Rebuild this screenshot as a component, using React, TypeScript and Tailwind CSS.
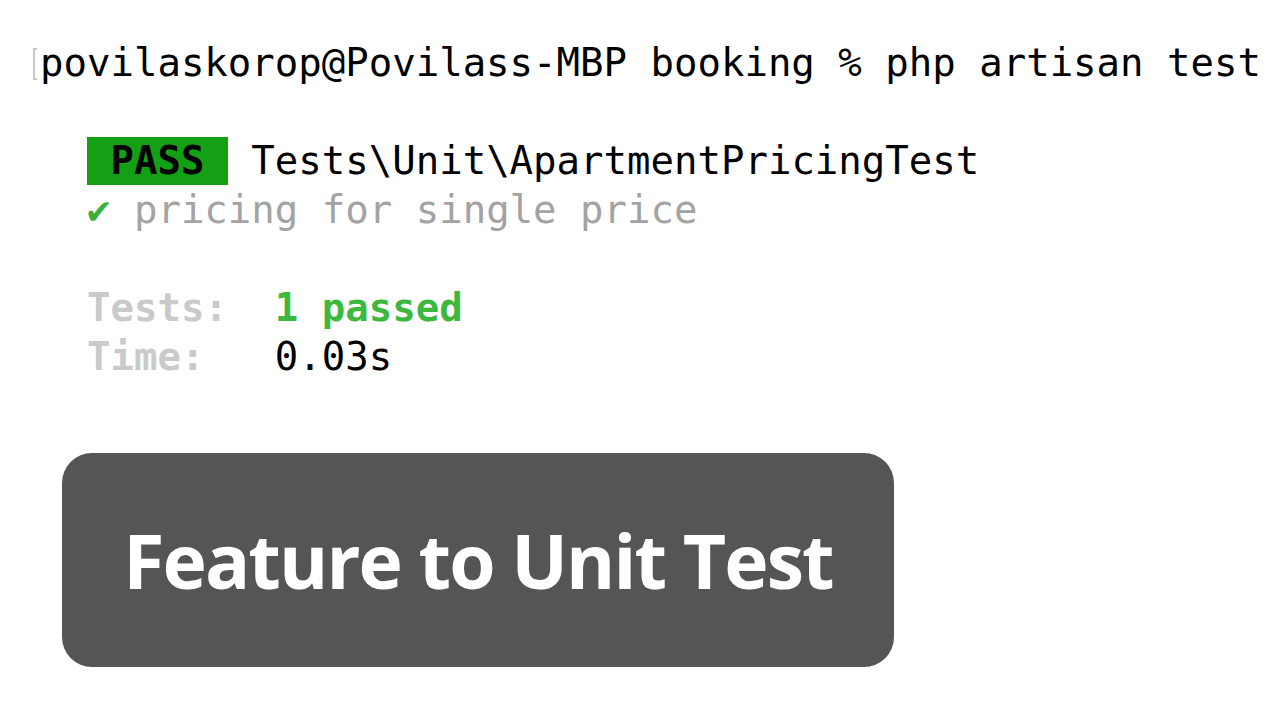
export default function App() {
  const mono = "font-['DejaVu_Sans_Mono','Liberation_Mono',monospace]";
  return (
    <main className="w-[1280px] h-[720px] bg-white overflow-hidden flex flex-col">
      {/* terminal output */}
      <div className={`${mono} text-[39px] leading-[49px] text-black whitespace-pre pt-[38px] pl-[40px]`}>
        <div className="relative">
          <span className="absolute left-[-7px] top-[10px] w-[4px] h-[32px] border-l-2 border-y-2 border-[#c8c8c8]" />
          povilaskorop@Povilass-MBP booking % php artisan test
        </div>
        <div>&nbsp;</div>
        <div>
          {"  "}
          <span className="bg-[#14a014] font-bold inline-block leading-[48px]"> PASS </span> Tests\Unit\ApartmentPricingTest
        </div>
        <div className="text-[#a3a3a3]">
          {"  "}
          <span className="text-[#3bb03b]">✔</span> pricing for single price
        </div>
        <div>&nbsp;</div>
        <div>
          {"  "}
          <span className="text-[#cacaca] font-bold">Tests:</span>
          {"  "}
          <span className="text-[#3cb83c] font-bold">1 passed</span>
        </div>
        <div>
          {"  "}
          <span className="text-[#cacaca] font-bold">Time:</span>
          {"   "}0.03s
        </div>
      </div>

      {/* title card */}
      <div className="ml-[62px] mt-[72px] w-[832px] h-[214px] rounded-[30px] bg-[#555555] flex items-center justify-center">
        <span className="font-['Open_Sans',sans-serif] font-bold text-white text-[75px] tracking-[-1.9px] leading-none">
          Feature to Unit Test
        </span>
      </div>
    </main>
  );
}
